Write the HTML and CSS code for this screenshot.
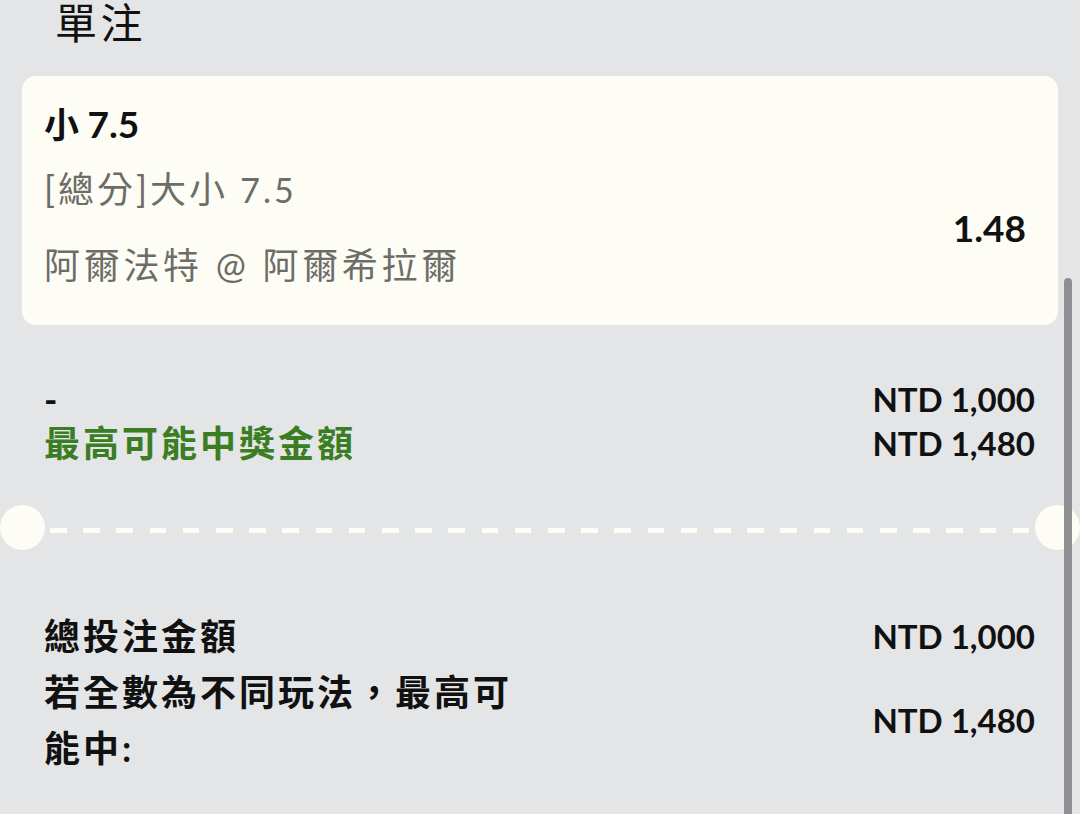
FILE: index.html
```html
<!DOCTYPE html>
<html lang="zh-Hant">
<head>
<meta charset="utf-8">
<title>單注</title>
<link rel="stylesheet" href="styles.css">
</head>
<body>
<div class="page">
  <h1 class="title">單注</h1>

  <div class="card">
    <div class="card-info">
      <div class="pick">小 <span class="num">7.5</span></div>
      <div class="market">[總分]大小 <span class="num">7.5</span></div>
      <div class="match">阿爾法特 @ 阿爾希拉爾</div>
    </div>
    <div class="odds">1.48</div>
  </div>

  <div class="row stake">
    <div class="labels">
      <div class="label">-</div>
      <div class="label green">最高可能中獎金額</div>
    </div>
    <div class="values">
      <div class="value">NTD 1,000</div>
      <div class="value">NTD 1,480</div>
    </div>
  </div>

  <div class="divider">
    <span class="hole"></span>
    <span class="dash"></span>
    <span class="hole"></span>
  </div>

  <div class="summary">
    <div class="sum-row">
      <div class="sum-label">總投注金額</div>
      <div class="value">NTD 1,000</div>
    </div>
    <div class="sum-row">
      <div class="sum-label wrap">若全數為不同玩法，最高可能中:</div>
      <div class="value">NTD 1,480</div>
    </div>
  </div>
</div>
<div class="scrollbar"></div>
</body>
</html>
```

FILE: styles.css
```css
html, body {
  margin: 0;
  padding: 0;
  background: #e4e5e7;
}

body {
  width: 1080px;
  height: 814px;
  overflow: hidden;
  font-family: Lato, "Noto Sans CJK TC", sans-serif;
  color: #111;
}

.page {
  display: flex;
  flex-direction: column;
}

.title {
  margin: 0 0 31px 0;
  padding: 1px 0 0 55px;
  font-size: 42px;
  line-height: 44px;
  font-weight: 400;
  letter-spacing: 3.5px;
}

.card {
  margin: 0 22px;
  height: 249px;
  box-sizing: border-box;
  background: #fdfcf5;
  border-radius: 14px;
  padding: 24px 32px 36px 22px;
  display: flex;
  justify-content: space-between;
}

.card-info {
  display: flex;
  flex-direction: column;
}

.pick {
  font-size: 35px;
  line-height: 48px;
  font-weight: 700;
  margin-bottom: 17px;
}

.pick .num {
  font-size: 37px;
}

.market, .match {
  font-size: 36px;
  line-height: 48px;
  color: #6d6d68;
  letter-spacing: 3px;
}

.market .num {
  font-size: 34px;
  letter-spacing: 3px;
}

.match {
  margin-top: 27px;
  letter-spacing: 3.7px;
}

.odds {
  align-self: flex-end;
  margin-bottom: 37px;
  font-size: 37px;
  line-height: 48px;
  font-weight: 700;
}

.row {
  display: flex;
  justify-content: space-between;
  padding: 0 45px 0 44px;
}

.stake {
  margin-top: 52px;
}

.label {
  font-size: 36px;
  line-height: 44px;
  font-weight: 700;
  letter-spacing: 3px;
}

.green {
  color: #3b7d22;
}

.values {
  display: flex;
  flex-direction: column;
  align-items: flex-end;
}

.value {
  font-size: 33px;
  line-height: 44px;
  font-weight: 700;
  white-space: nowrap;
}

.divider {
  margin-top: 40px;
  height: 45px;
  display: flex;
  align-items: center;
}

.hole {
  width: 45px;
  height: 45px;
  border-radius: 50%;
  background: #fdfcf5;
  flex: none;
}

.dash {
  flex: 1;
  height: 5px;
  margin: 6px 5px 0 5px;
  background: repeating-linear-gradient(90deg, #fdfcf5 0 16.6px, transparent 16.6px 33.2px);
}

.summary {
  margin-top: 58px;
  padding: 0 45px 0 44px;
  display: flex;
  flex-direction: column;
}

.sum-row {
  display: flex;
  justify-content: space-between;
  align-items: center;
}

.sum-label {
  font-size: 36px;
  line-height: 56px;
  font-weight: 700;
  letter-spacing: 3px;
}

.wrap {
  width: 480px;
}

.scrollbar {
  position: fixed;
  right: 8px;
  top: 278px;
  bottom: -10px;
  width: 8px;
  border-radius: 4px;
  background: #8e8e93;
}
```
